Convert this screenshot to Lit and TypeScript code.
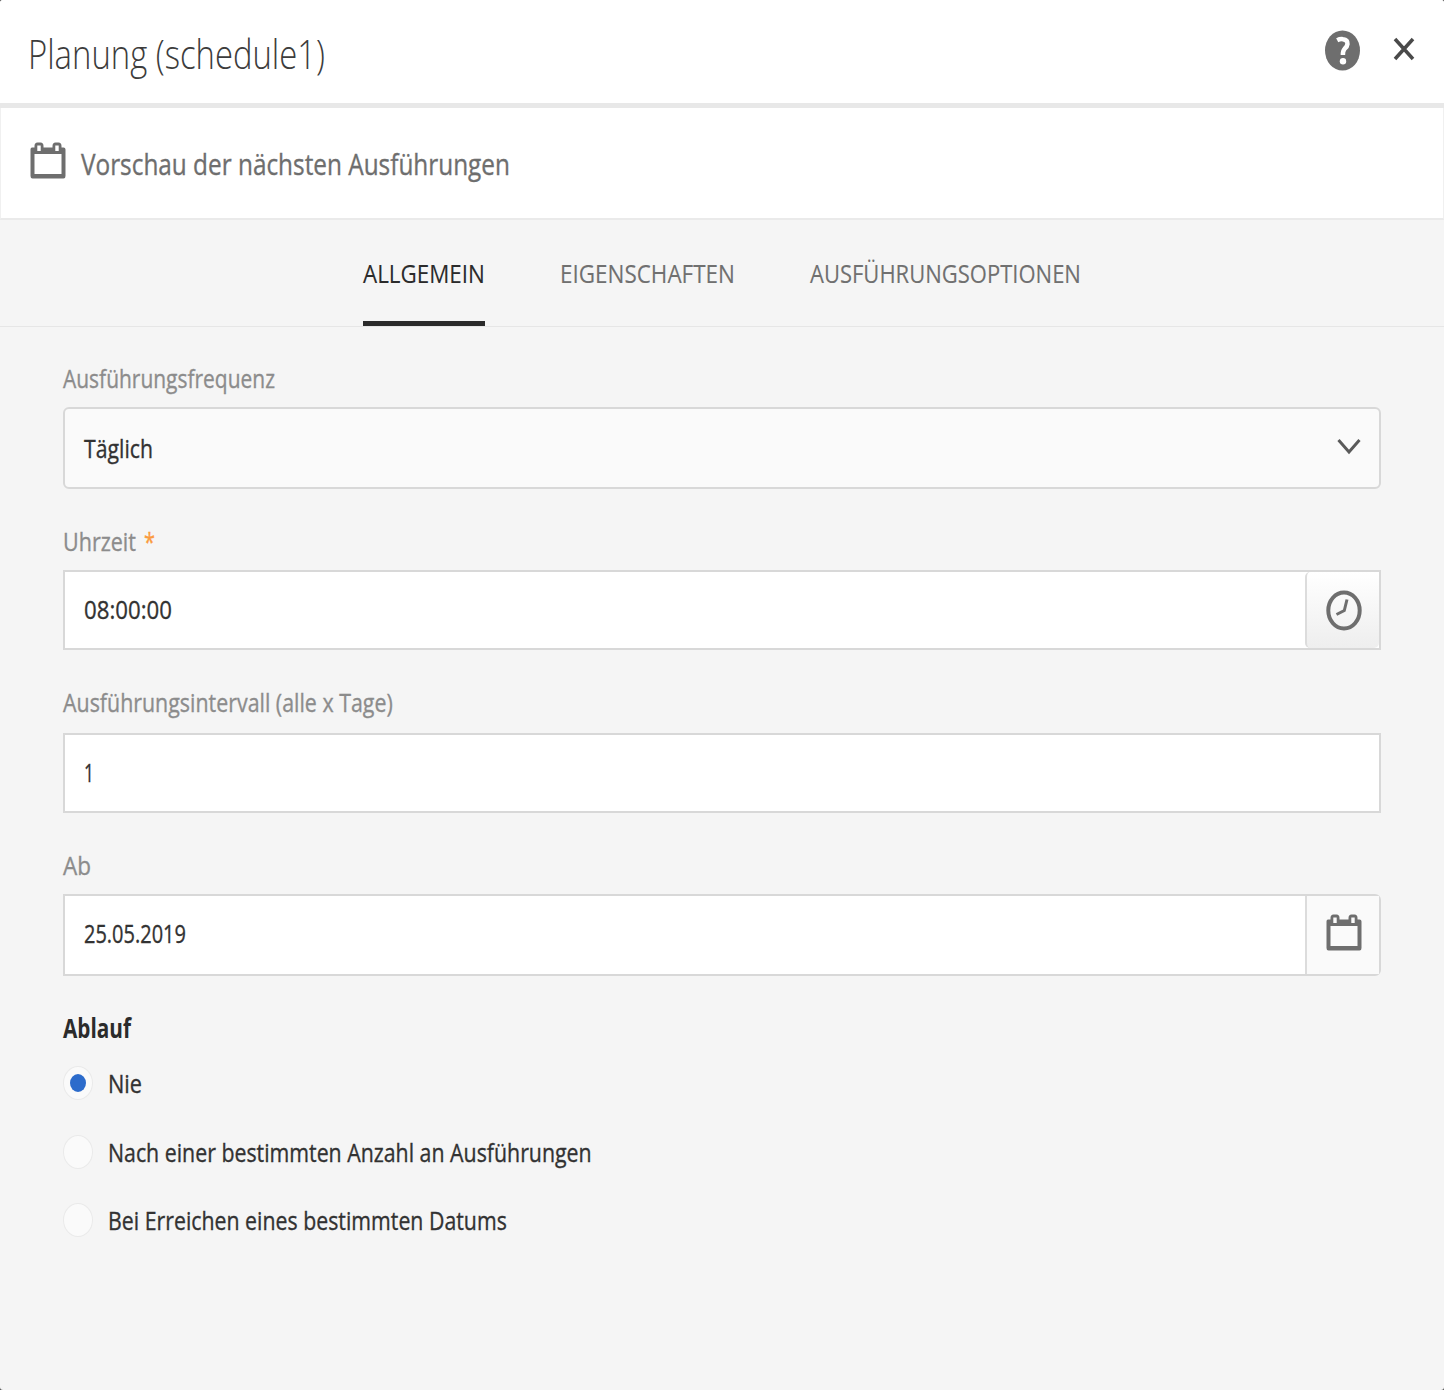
import { LitElement, html, css, nothing } from "lit";
import { customElement, property, state } from "lit/decorators.js";

/** One line of text condensed to an exact advance width. The baseline sits 29px below the top of a 40px line. */
@customElement("fit-text")
class FitText extends LitElement {
  @property() text = "";
  @property({ type: Number }) width = 100;
  @property({ type: Number }) size = 26;

  static styles = css`
    :host { display: block; flex: none; height: 40px; }
    svg { display: block; overflow: visible; }
    text { fill: currentColor; stroke: currentColor; stroke-width: var(--ink, 0.35px); font-family: "Open Sans", "Noto Sans", sans-serif; }
  `;

  updated() {
    const line = this.renderRoot.querySelector("text") as SVGTextElement;
    const natural = line.getComputedTextLength();
    if (natural > 0) line.setAttribute("transform", `scale(${this.width / natural} 1)`);
  }

  render() {
    return html`<svg width=${this.width} height="40" role="presentation">
      <text x="0" y="29" font-size=${this.size}>${this.text}</text>
    </svg>`;
  }
}

const calendarIcon = html`<svg class="icon" width="36" height="38" viewBox="0 0 36 38">
  <path fill="currentColor" fill-rule="evenodd" d="M2 5.500H4.500V4Q4.500 .5 7.500 .5H10.500Q13.500 .5 13.500 4V5.500H22.500V4Q22.500 .5 25.500 .5H28.500Q31.500 .5 31.500 4V5.500H33.500Q35.500 5.500 35.500 7.500V34Q35.500 36.500 33.500 36.500H2.500Q.5 36.500 .5 34V7.500Q.5 5.500 2 5.500ZM4.500 12V32H31.500V12ZM7.300 3.500V9H10.700V3.500ZM25.300 3.500V9H28.700V3.500Z"/>
</svg>`;

@customElement("app-root")
class AppRoot extends LitElement {
  @state() tab = 0;
  @state() expiry = 0;

  static styles = css`
    :host { display: block; font-family: "Open Sans", "Noto Sans", sans-serif; }
    * { box-sizing: border-box; }
    .dialog { width: 1444px; height: 1390px; background: #f5f5f5; display: flex; flex-direction: column; border-radius: 3px; overflow: hidden; box-shadow: 0 0 0 4px #555; }
    .header { height: 108px; flex: none; background: #fff; border-bottom: 5px solid #e8e8e8; display: flex; align-items: flex-start; padding: 0 29px 0 28px; }
    .title { color: #3c3c3c; font-weight: 300; margin-top: 40px; --ink: 0px; }
    .spacer { flex: 1; }
    .help { margin: 30px 32px 0 0; display: block; }
    .close { margin-top: 37px; display: block; }
    .preview { height: 112px; flex: none; background: #fff; border-bottom: 2px solid #eaeaea; border-left: 1px solid #f0f0f0; border-right: 1px solid #f0f0f0; display: flex; padding: 34px 0 0 29px; color: #6e6e6e; }
    .preview fit-text { margin: 4px 0 0 15px; }
    .icon { display: block; flex: none; }
    .tabs { height: 107px; flex: none; border-bottom: 1px solid #e6e6e6; display: flex; justify-content: center; gap: 75px; }
    .tab { height: 106px; padding-top: 34px; border-bottom: 5px solid transparent; color: #707070; cursor: pointer; --ink: 0.1px; }
    .tab.on { color: #2b2b2b; border-bottom-color: #2b2b2b; }
    .form { padding: 32px 63px 0 63px; display: flex; flex-direction: column; }
    .field { height: 163px; }
    .label { height: 48px; display: flex; color: #8c8c8c; }
    .interval { margin-top: -2px; }
    .interval .label { height: 50px; }
    .star { color: #fb9b3e; margin-left: 8px; }
    .box { height: 80px; display: flex; background: #fff; border: 2px solid #d8d8d8; color: #323232; padding-left: 19px; }
    .box fit-text { margin-top: 18px; }
    .box.select { height: 82px; background: #fafafa; border-radius: 6px; padding-right: 18px; }
    .box.select fit-text { margin-top: 20px; }
    .chevron { margin-top: 29px; }
    .box.date { height: 82px; border-radius: 0 6px 6px 0; }
    .button { width: 74px; display: flex; justify-content: center; color: #6e6e6e; border-left: 2px solid #dcdcdc; }
    .button svg { margin-left: 2px; }
    .button.time { background: linear-gradient(#fff, #eee); border-radius: 5px; }
    .button.day { background: #fafafa; padding-top: 18px; }
    .button.time svg { margin-top: 18px; }
    .heading { color: #2b2b2b; font-weight: 700; --ink: 0px; }
    .radio { display: flex; height: 68.5px; color: #323232; cursor: pointer; }
    .radios { padding-top: 17px; }
    .radio fit-text { margin: -2px 0 0 15px; }
    .dot { width: 30px; height: 34px; border-radius: 50%; background: #fafafa; border: 1px solid #eaeaea; display: grid; place-items: center; }
    .dot i { width: 16px; height: 18px; border-radius: 50%; background: #2c6bcb; }
  `;

  private field(label: string, labelWidth: number, box: unknown, required = false, variant = "") {
    return html`<div class="field ${variant}">
      <div class="label"><fit-text .text=${label} .width=${labelWidth}></fit-text>
        ${required ? html`<fit-text class="star" .text=${"*"} .width=${11}></fit-text>` : nothing}</div>
      ${box}
    </div>`;
  }

  render() {
    const tabs: [string, number][] = [["ALLGEMEIN", 122], ["EIGENSCHAFTEN", 175], ["AUSFÜHRUNGSOPTIONEN", 271]];
    const options: [string, number][] = [["Nie", 34], ["Nach einer bestimmten Anzahl an Ausführungen", 484], ["Bei Erreichen eines bestimmten Datums", 399]];
    return html`<div class="dialog">
      <div class="header">
        <fit-text class="title" .text=${"Planung (schedule1)"} .width=${297} .size=${40.5}></fit-text>
        <div class="spacer"></div>
        <svg class="help" width="36" height="41" viewBox="0 0 36 41">
          <ellipse cx="17.500" cy="20.500" rx="17.500" ry="20" fill="#6e6e6e"/>
          <path d="M12.200 10.300Q15 8.800 18 9.200Q22.800 9.700 22.500 14Q22.300 16.500 19.600 18.800Q17.800 20.500 17.900 25" fill="none" stroke="#fff" stroke-width="4.500"/>
          <circle cx="18" cy="31.300" r="3.200" fill="#fff"/>
        </svg>
        <svg class="close" width="22" height="24" viewBox="0 0 22 24"><path d="M2 2L20 22M20 2L2 22" stroke="#4a4a4a" stroke-width="3.500" fill="none"/></svg>
      </div>
      <div class="preview">${calendarIcon}<fit-text .text=${"Vorschau der nächsten Ausführungen"} .width=${429} .size=${29.5}></fit-text></div>
      <div class="tabs">${tabs.map(([t, w], i) => html`<div class="tab ${i === this.tab ? "on" : ""}" @click=${() => (this.tab = i)}><fit-text .text=${t} .width=${w}></fit-text></div>`)}</div>
      <div class="form">
        ${this.field("Ausführungsfrequenz", 212, html`<div class="box select"><fit-text .text=${"Täglich"} .width=${69}></fit-text><div class="spacer"></div>
          <svg class="chevron" width="24" height="18" viewBox="0 0 24 18"><path d="M1.500 2L12 14L22.500 2" fill="none" stroke="#5a5a5a" stroke-width="3"/></svg></div>`)}
        ${this.field("Uhrzeit", 73, html`<div class="box"><fit-text .text=${"08:00:00"} .width=${88}></fit-text><div class="spacer"></div>
          <div class="button time"><svg width="36" height="41" viewBox="0 0 36 41" fill="none" stroke="currentColor"><ellipse cx="18" cy="20.500" rx="15.700" ry="18" stroke-width="4"/><path d="M21 9.500L18.300 20.500L10.500 24.500" stroke-width="3"/></svg></div></div>`, true)}
        ${this.field("Ausführungsintervall (alle x Tage)", 330, html`<div class="box"><fit-text .text=${"1"} .width=${10}></fit-text></div>`, false, "interval")}
        ${this.field("Ab", 28, html`<div class="box date"><fit-text .text=${"25.05.2019"} .width=${102}></fit-text><div class="spacer"></div><div class="button day">${calendarIcon}</div></div>`)}
        <fit-text class="heading" .text=${"Ablauf"} .width=${68}></fit-text>
        <div class="radios">${options.map(([t, w], i) => html`<div class="radio" @click=${() => (this.expiry = i)}><span class="dot">${i === this.expiry ? html`<i></i>` : nothing}</span><fit-text .text=${t} .width=${w}></fit-text></div>`)}</div>
      </div>
    </div>`;
  }
}
